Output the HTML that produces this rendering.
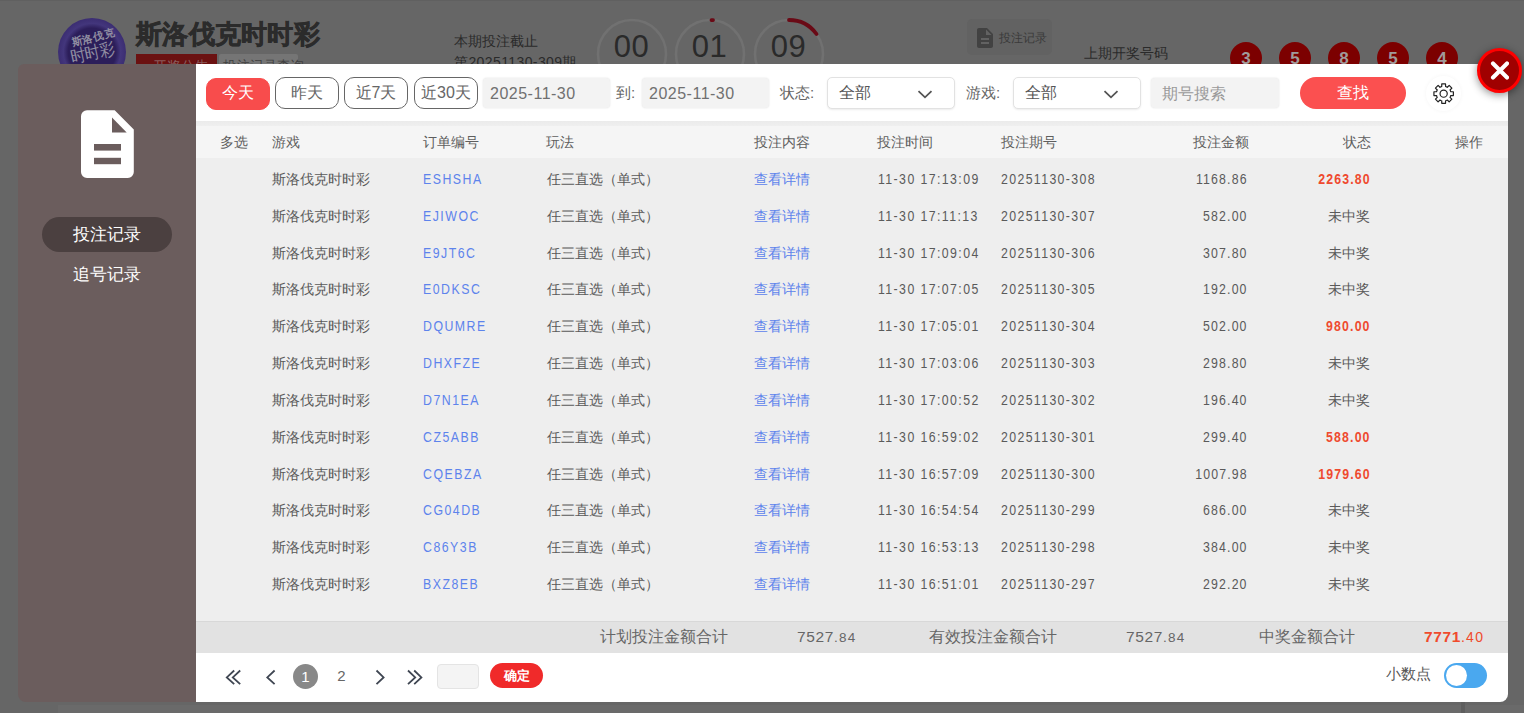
<!DOCTYPE html>
<html><head><meta charset="utf-8">
<style>
*{box-sizing:border-box;margin:0;padding:0}
html,body{width:1524px;height:713px;overflow:hidden}
body{position:relative;background:#666;font-family:"Liberation Sans",sans-serif;color:#555}
.a{position:absolute;white-space:nowrap}
/* background page */
.logo{left:58px;top:18px;width:68px;height:68px;border-radius:50%;background:radial-gradient(circle closest-side,#2c1e5a 0,#2c1e5a 70%,#43367c 84%,#3b2d72 100%);overflow:hidden}
.logo span{position:absolute;color:#918ea2;white-space:nowrap;line-height:1}
.ttl{left:136px;top:16px;font-size:26px;font-weight:bold;color:#2b2b2b;line-height:36px;-webkit-text-stroke:.7px #2b2b2b;letter-spacing:.3px}
.tabr{left:136px;top:54px;width:81px;height:20px;background:#6b1111}
.tabg{left:219px;top:54px;width:79px;height:20px;background:#757575;border-radius:2px}
.bt{font-size:14px;color:#2a2a2a;line-height:20px}
.dig{font-size:31px;letter-spacing:.5px;color:#2a2a2a;line-height:30px;text-align:center;width:69px}
.hbtn{left:967px;top:19px;width:85px;height:36px;border-radius:5px;background:#626262}
.ball{width:32px;height:32px;border-radius:50%;background:#7c0000;top:42px;color:#a09a9a;font-weight:bold;font-size:17px;line-height:34px;text-align:center}
.bstrip{left:58px;top:705px;width:1466px;height:8px;background:#6a6a6a}
/* modal */
.lp{left:18px;top:64px;width:184px;height:638px;background:#6b5d5d;border-radius:6px 0 0 8px}
.rp{left:196px;top:64px;width:1312px;height:638px;background:#fff;border-radius:0 0 8px 0;overflow:hidden}
.menu{left:42px;top:217px;width:130px;height:35px;border-radius:17.5px;background:#4b4040;color:#fff;font-size:16.5px;line-height:35px;text-align:center}
.menu2{left:42px;top:257px;width:130px;height:34px;color:#fff;font-size:16.5px;line-height:34px;text-align:center}
.btn{top:13px;height:32px;border:1px solid #666;border-radius:10px;font-size:16px;line-height:30px;text-align:center;color:#666;background:#fff}
.btn.on{background:#f84c4c;border-color:#f84c4c;color:#fff}
.inp{top:14px;height:30px;width:127px;background:#f3f3f3;border-radius:4px;box-shadow:0 0 2px rgba(0,0,0,.12);font-size:16px;line-height:32px;color:#707070;padding-left:7px;letter-spacing:.5px}
.lbl{top:14px;font-size:15px;line-height:30px;color:#666}
.sel{top:13px;height:32px;width:128px;border:1px solid #e2e2e2;box-shadow:0 1px 2px rgba(0,0,0,.08);border-radius:5px;background:#fff;font-size:16px;line-height:30px;color:#555;padding-left:11px}
.sel svg{position:absolute;left:89px;top:12px}
.sel path{stroke-width:1.8}
.qbtn{left:1104px;top:13px;width:106px;height:32px;border-radius:16px;background:#fb5050;color:#fff;font-size:16px;line-height:31px;text-align:center}
.gear{left:1230px;top:12px;width:35px;height:35px;border-radius:50%;background:#fff;box-shadow:0 0 4px rgba(0,0,0,.045)}
.gear svg{position:absolute;left:5.9px;top:5.9px}
.thead{left:0;top:57px;width:1312px;height:37px;background:#f5f5f5}
.tband{left:0;top:57px;width:1312px;height:5px;background:linear-gradient(#ebebeb,#efefef)}
.tbody{left:0;top:94px;width:1312px;height:463px;background:#eee}
.th{font-size:14px;color:#5e5e5e;top:70px;line-height:16px}
:root{--r0:97px;--rh:36.82px}
.row{left:0;width:1297px;height:var(--rh)}
.c{position:absolute;top:0;line-height:var(--rh);font-size:14px;color:#5a5a5a;white-space:nowrap}
.n{display:inline-block;transform:scaleX(.88);transform-origin:left center;letter-spacing:1.3px}
.n.r{transform-origin:right center}
.lnk{color:#5d83ec}
.red{color:#ef4a2f;font-weight:bold;letter-spacing:.4px}
.sum{left:0;top:557px;width:1312px;height:32px;background:#e2e2e2;border-top:1px solid #d8d8d8}
.st{top:557px;font-size:16px;line-height:31px;color:#666}
.big{font-size:15.5px;letter-spacing:.6px}
.sml{font-size:13.5px;letter-spacing:1.3px}
.pgi{top:605px}
.pnum{top:600px;width:25px;height:25px;border-radius:50%;font-size:15px;line-height:25px;text-align:center;color:#666}
.pbox{left:241px;top:600px;width:42px;height:25px;background:#f4f4f4;border:1px solid #e4e4e4;border-radius:4px}
.ok{left:294px;top:599px;width:53px;height:25px;border-radius:13px;background:#f02a2a;color:#fff;font-size:13px;font-weight:bold;line-height:25px;text-align:center}
.tog{left:1248px;top:599px;width:43px;height:25px;border-radius:13px;background:#4aa8ef}
.tog i{position:absolute;left:2px;top:2px;width:21px;height:21px;border-radius:50%;background:#fff}
.close{left:1477px;top:48px;width:45px;height:45px;border-radius:50%;background:#a00000;border:3px solid #f00;box-shadow:0 2px 8px rgba(0,0,0,.45)}
.close svg{position:absolute;left:10px;top:10px}
</style></head><body>
<!-- background page -->
<div class="a bstrip"></div>
<div class="a" style="left:0;top:0;width:1524px;height:1px;background:#606060"></div>
<div class="a" style="left:1461px;top:702px;width:4px;height:11px;background:#5e5e5e"></div>
<div class="a logo">
  <span style="left:13px;top:14px;font-size:10.5px;transform:rotate(-14deg);font-weight:bold">斯洛伐克</span>
  <span style="left:12px;top:27px;font-size:15px;transform:rotate(-12deg) scaleY(1.15)">时时彩</span>
</div>
<div class="a ttl">斯洛伐克时时彩</div>
<div class="a tabr"></div>
<div class="a tabg"></div>
<div class="a" style="left:153px;top:57px;font-size:14px;line-height:18px;color:#8a5a5a">开奖公告</div>
<div class="a" style="left:223px;top:57px;font-size:13px;line-height:18px;color:#404040;letter-spacing:.6px">投注记录查询</div>
<div class="a bt" style="left:454px;top:31px">本期投注截止</div>
<div class="a bt" style="left:454px;top:52px;letter-spacing:.4px">第20251130-309期</div>
<svg class="a" style="left:590px;top:12px" width="250" height="90" viewBox="0 0 250 90">
  <g fill="none" stroke="#717171" stroke-width="2.6">
    <circle cx="42" cy="42" r="34"/><circle cx="120" cy="42" r="34"/><circle cx="199" cy="42" r="34"/>
  </g>
  <g fill="none" stroke="#6a0a16" stroke-width="3.8" stroke-linecap="round">
    <path d="M121.5 8.1 A34 34 0 0 1 123 8.2"/>
    <path d="M199 8 A34 34 0 0 1 226.5 22"/>
  </g>
</svg>
<div class="a dig" style="left:597px;top:32px">00</div>
<div class="a dig" style="left:675px;top:32px">01</div>
<div class="a dig" style="left:754px;top:32px">09</div>
<div class="a hbtn"></div>
<svg class="a" style="left:973px;top:26px" width="24" height="24" viewBox="0 0 24 24"><path fill="#424242" d="M14 2H6c-1.1 0-1.99.9-1.99 2L4 20c0 1.1.89 2 1.99 2H18c1.1 0 2-.9 2-2V8l-6-6zm2 16H8v-2h8v2zm0-4H8v-2h8v2zm-3-5V3.5L18.5 9H13z"/></svg>
<div class="a bt" style="left:999px;top:28px;font-size:12px;color:#3a3a3a">投注记录</div>
<div class="a bt" style="left:1084px;top:43px">上期开奖号码</div>
<div class="a ball" style="left:1230px">3</div>
<div class="a ball" style="left:1279px">5</div>
<div class="a ball" style="left:1328px">8</div>
<div class="a ball" style="left:1377px">5</div>
<div class="a ball" style="left:1426px">4</div>

<!-- modal left -->
<div class="a lp"></div>
<svg class="a" style="left:76px;top:104px" width="64" height="80" viewBox="0 0 64 80"><path fill="#fff" d="M11 6.2H38.7L57.8 25.4V68.1a6 6 0 0 1-6 6H11a6 6 0 0 1-6-6V12.2a6 6 0 0 1 6-6Z"/><path fill="#6b5d5d" d="M36 13.5V28.6H50.7Z"/><rect fill="#6b5d5d" x="18" y="40" width="27" height="6.6"/><rect fill="#6b5d5d" x="18" y="53.8" width="27" height="6.4"/></svg>
<div class="a menu">投注记录</div>
<div class="a menu2">追号记录</div>

<!-- modal right -->
<div class="a rp">
  <div class="a btn on" style="left:10px;width:64px;top:14px;line-height:28px;font-size:16px">今天</div>
  <div class="a btn" style="left:79px;width:64px">昨天</div>
  <div class="a btn" style="left:148px;width:64px">近7天</div>
  <div class="a btn" style="left:218px;width:64px">近30天</div>
  <div class="a inp" style="left:287px">2025-11-30</div>
  <div class="a lbl" style="left:420px">到:</div>
  <div class="a inp" style="left:446px">2025-11-30</div>
  <div class="a lbl" style="left:584px">状态:</div>
  <div class="a sel" style="left:631px">全部<svg width="16" height="9" viewBox="0 0 16 9"><path d="M1.5 1.2L8 7.3L14.5 1.2" fill="none" stroke="#555" stroke-width="2"/></svg></div>
  <div class="a lbl" style="left:770px">游戏:</div>
  <div class="a sel" style="left:817px">全部<svg width="16" height="9" viewBox="0 0 16 9"><path d="M1.5 1.2L8 7.3L14.5 1.2" fill="none" stroke="#555" stroke-width="2"/></svg></div>
  <div class="a inp" style="left:955px;width:128px;font-size:16px;color:#999;padding-left:11px;letter-spacing:0">期号搜索</div>
  <div class="a qbtn">查找</div>
  <div class="a gear"><svg width="23.3" height="23.3" viewBox="0 0 24 24"><path fill="none" stroke="#222" stroke-width="1.25" stroke-linejoin="round" d="M9.09 4.98 L10.03 4.66 L10.05 1.99 L13.95 1.99 L13.97 4.66 L14.91 4.98 L15.80 5.42 L17.70 3.54 L20.46 6.30 L18.58 8.20 L19.02 9.09 L19.34 10.03 L22.01 10.05 L22.01 13.95 L19.34 13.97 L19.02 14.91 L18.58 15.80 L20.46 17.70 L17.70 20.46 L15.80 18.58 L14.91 19.02 L13.97 19.34 L13.95 22.01 L10.05 22.01 L10.03 19.34 L9.09 19.02 L8.20 18.58 L6.30 20.46 L3.54 17.70 L5.42 15.80 L4.98 14.91 L4.66 13.97 L1.99 13.95 L1.99 10.05 L4.66 10.03 L4.98 9.09 L5.42 8.20 L3.54 6.30 L6.30 3.54 L8.20 5.42Z"/><circle cx="12" cy="12" r="3.7" fill="none" stroke="#222" stroke-width="1.25"/></svg></div>

  <div class="a thead"></div>
  <div class="a tband"></div>
  <div class="a tbody"></div>
  <div class="a th" style="left:24px">多选</div>
  <div class="a th" style="left:76px">游戏</div>
  <div class="a th" style="left:227px">订单编号</div>
  <div class="a th" style="left:350px">玩法</div>
  <div class="a th" style="left:558px">投注内容</div>
  <div class="a th" style="left:681px">投注时间</div>
  <div class="a th" style="left:805px">投注期号</div>
  <div class="a th" style="left:997px">投注金额</div>
  <div class="a th" style="left:1147px">状态</div>
  <div class="a th" style="left:1259px">操作</div>
  <div class="a row" style="top:calc(var(--r0) + 0 * var(--rh))">
<div class="c" style="left:76px">斯洛伐克时时彩</div>
<div class="c lnk" style="left:227px"><span class="n" style="letter-spacing:1.7px">ESHSHA</span></div>
<div class="c" style="left:351px">任三直选（单式）</div>
<div class="c lnk" style="left:558px">查看详情</div>
<div class="c" style="left:682px"><span class="n" style="letter-spacing:1.6px">11-30 17:13:09</span></div>
<div class="c" style="left:805px"><span class="n" style="letter-spacing:1.55px">20251130-308</span></div>
<div class="c" style="right:245px"><span class="n r">1168.86</span></div>
<div class="c red" style="right:122px"><span class="n r">2263.80</span></div>
</div>
<div class="a row" style="top:calc(var(--r0) + 1 * var(--rh))">
<div class="c" style="left:76px">斯洛伐克时时彩</div>
<div class="c lnk" style="left:227px"><span class="n" style="letter-spacing:1.7px">EJIWOC</span></div>
<div class="c" style="left:351px">任三直选（单式）</div>
<div class="c lnk" style="left:558px">查看详情</div>
<div class="c" style="left:682px"><span class="n" style="letter-spacing:1.6px">11-30 17:11:13</span></div>
<div class="c" style="left:805px"><span class="n" style="letter-spacing:1.55px">20251130-307</span></div>
<div class="c" style="right:245px"><span class="n r">582.00</span></div>
<div class="c" style="right:123px">未中奖</div>
</div>
<div class="a row" style="top:calc(var(--r0) + 2 * var(--rh))">
<div class="c" style="left:76px">斯洛伐克时时彩</div>
<div class="c lnk" style="left:227px"><span class="n" style="letter-spacing:1.7px">E9JT6C</span></div>
<div class="c" style="left:351px">任三直选（单式）</div>
<div class="c lnk" style="left:558px">查看详情</div>
<div class="c" style="left:682px"><span class="n" style="letter-spacing:1.6px">11-30 17:09:04</span></div>
<div class="c" style="left:805px"><span class="n" style="letter-spacing:1.55px">20251130-306</span></div>
<div class="c" style="right:245px"><span class="n r">307.80</span></div>
<div class="c" style="right:123px">未中奖</div>
</div>
<div class="a row" style="top:calc(var(--r0) + 3 * var(--rh))">
<div class="c" style="left:76px">斯洛伐克时时彩</div>
<div class="c lnk" style="left:227px"><span class="n" style="letter-spacing:1.7px">E0DKSC</span></div>
<div class="c" style="left:351px">任三直选（单式）</div>
<div class="c lnk" style="left:558px">查看详情</div>
<div class="c" style="left:682px"><span class="n" style="letter-spacing:1.6px">11-30 17:07:05</span></div>
<div class="c" style="left:805px"><span class="n" style="letter-spacing:1.55px">20251130-305</span></div>
<div class="c" style="right:245px"><span class="n r">192.00</span></div>
<div class="c" style="right:123px">未中奖</div>
</div>
<div class="a row" style="top:calc(var(--r0) + 4 * var(--rh))">
<div class="c" style="left:76px">斯洛伐克时时彩</div>
<div class="c lnk" style="left:227px"><span class="n" style="letter-spacing:1.7px">DQUMRE</span></div>
<div class="c" style="left:351px">任三直选（单式）</div>
<div class="c lnk" style="left:558px">查看详情</div>
<div class="c" style="left:682px"><span class="n" style="letter-spacing:1.6px">11-30 17:05:01</span></div>
<div class="c" style="left:805px"><span class="n" style="letter-spacing:1.55px">20251130-304</span></div>
<div class="c" style="right:245px"><span class="n r">502.00</span></div>
<div class="c red" style="right:122px"><span class="n r">980.00</span></div>
</div>
<div class="a row" style="top:calc(var(--r0) + 5 * var(--rh))">
<div class="c" style="left:76px">斯洛伐克时时彩</div>
<div class="c lnk" style="left:227px"><span class="n" style="letter-spacing:1.7px">DHXFZE</span></div>
<div class="c" style="left:351px">任三直选（单式）</div>
<div class="c lnk" style="left:558px">查看详情</div>
<div class="c" style="left:682px"><span class="n" style="letter-spacing:1.6px">11-30 17:03:06</span></div>
<div class="c" style="left:805px"><span class="n" style="letter-spacing:1.55px">20251130-303</span></div>
<div class="c" style="right:245px"><span class="n r">298.80</span></div>
<div class="c" style="right:123px">未中奖</div>
</div>
<div class="a row" style="top:calc(var(--r0) + 6 * var(--rh))">
<div class="c" style="left:76px">斯洛伐克时时彩</div>
<div class="c lnk" style="left:227px"><span class="n" style="letter-spacing:1.7px">D7N1EA</span></div>
<div class="c" style="left:351px">任三直选（单式）</div>
<div class="c lnk" style="left:558px">查看详情</div>
<div class="c" style="left:682px"><span class="n" style="letter-spacing:1.6px">11-30 17:00:52</span></div>
<div class="c" style="left:805px"><span class="n" style="letter-spacing:1.55px">20251130-302</span></div>
<div class="c" style="right:245px"><span class="n r">196.40</span></div>
<div class="c" style="right:123px">未中奖</div>
</div>
<div class="a row" style="top:calc(var(--r0) + 7 * var(--rh))">
<div class="c" style="left:76px">斯洛伐克时时彩</div>
<div class="c lnk" style="left:227px"><span class="n" style="letter-spacing:1.7px">CZ5ABB</span></div>
<div class="c" style="left:351px">任三直选（单式）</div>
<div class="c lnk" style="left:558px">查看详情</div>
<div class="c" style="left:682px"><span class="n" style="letter-spacing:1.6px">11-30 16:59:02</span></div>
<div class="c" style="left:805px"><span class="n" style="letter-spacing:1.55px">20251130-301</span></div>
<div class="c" style="right:245px"><span class="n r">299.40</span></div>
<div class="c red" style="right:122px"><span class="n r">588.00</span></div>
</div>
<div class="a row" style="top:calc(var(--r0) + 8 * var(--rh))">
<div class="c" style="left:76px">斯洛伐克时时彩</div>
<div class="c lnk" style="left:227px"><span class="n" style="letter-spacing:1.7px">CQEBZA</span></div>
<div class="c" style="left:351px">任三直选（单式）</div>
<div class="c lnk" style="left:558px">查看详情</div>
<div class="c" style="left:682px"><span class="n" style="letter-spacing:1.6px">11-30 16:57:09</span></div>
<div class="c" style="left:805px"><span class="n" style="letter-spacing:1.55px">20251130-300</span></div>
<div class="c" style="right:245px"><span class="n r">1007.98</span></div>
<div class="c red" style="right:122px"><span class="n r">1979.60</span></div>
</div>
<div class="a row" style="top:calc(var(--r0) + 9 * var(--rh))">
<div class="c" style="left:76px">斯洛伐克时时彩</div>
<div class="c lnk" style="left:227px"><span class="n" style="letter-spacing:1.7px">CG04DB</span></div>
<div class="c" style="left:351px">任三直选（单式）</div>
<div class="c lnk" style="left:558px">查看详情</div>
<div class="c" style="left:682px"><span class="n" style="letter-spacing:1.6px">11-30 16:54:54</span></div>
<div class="c" style="left:805px"><span class="n" style="letter-spacing:1.55px">20251130-299</span></div>
<div class="c" style="right:245px"><span class="n r">686.00</span></div>
<div class="c" style="right:123px">未中奖</div>
</div>
<div class="a row" style="top:calc(var(--r0) + 10 * var(--rh))">
<div class="c" style="left:76px">斯洛伐克时时彩</div>
<div class="c lnk" style="left:227px"><span class="n" style="letter-spacing:1.7px">C86Y3B</span></div>
<div class="c" style="left:351px">任三直选（单式）</div>
<div class="c lnk" style="left:558px">查看详情</div>
<div class="c" style="left:682px"><span class="n" style="letter-spacing:1.6px">11-30 16:53:13</span></div>
<div class="c" style="left:805px"><span class="n" style="letter-spacing:1.55px">20251130-298</span></div>
<div class="c" style="right:245px"><span class="n r">384.00</span></div>
<div class="c" style="right:123px">未中奖</div>
</div>
<div class="a row" style="top:calc(var(--r0) + 11 * var(--rh))">
<div class="c" style="left:76px">斯洛伐克时时彩</div>
<div class="c lnk" style="left:227px"><span class="n" style="letter-spacing:1.7px">BXZ8EB</span></div>
<div class="c" style="left:351px">任三直选（单式）</div>
<div class="c lnk" style="left:558px">查看详情</div>
<div class="c" style="left:682px"><span class="n" style="letter-spacing:1.6px">11-30 16:51:01</span></div>
<div class="c" style="left:805px"><span class="n" style="letter-spacing:1.55px">20251130-297</span></div>
<div class="c" style="right:245px"><span class="n r">292.20</span></div>
<div class="c" style="right:123px">未中奖</div>
</div>

  <div class="a sum"></div>
  <div class="a st" style="left:404px">计划投注金额合计</div>
  <div class="a st" style="left:601px"><span class="big">7527</span><span class="sml">.84</span></div>
  <div class="a st" style="left:733px">有效投注金额合计</div>
  <div class="a st" style="left:930px"><span class="big">7527</span><span class="sml">.84</span></div>
  <div class="a st" style="left:1063px">中奖金额合计</div>
  <div class="a st" style="left:1228px;color:#f04a2c"><span class="big" style="font-weight:bold">7771</span><span class="sml" style="font-size:14px">.40</span></div>

  <svg class="a pgi" style="left:28px" width="20" height="17" viewBox="0 0 20 17"><path d="M10.2 1.5L2.8 8.4L10.2 15.2M16.2 1.5L8.8 8.4L16.2 15.2" fill="none" stroke="#3f4652" stroke-width="1.8"/></svg>
  <svg class="a pgi" style="left:68px" width="14" height="17" viewBox="0 0 14 17"><path d="M10.6 1.5L3.3 8.4L10.6 15.2" fill="none" stroke="#3f4652" stroke-width="1.8"/></svg>
  <div class="a pnum" style="left:97px;background:#888;color:#fff">1</div>
  <div class="a pnum" style="left:133px;top:599px">2</div>
  <svg class="a pgi" style="left:176px" width="14" height="17" viewBox="0 0 14 17"><path d="M4.5 1.5L11.6 8.4L4.5 15.2" fill="none" stroke="#3f4652" stroke-width="1.8"/></svg>
  <svg class="a pgi" style="left:208px" width="20" height="17" viewBox="0 0 20 17"><path d="M4 1.5L11.2 8.4L4 15.2M10.2 1.5L17.4 8.4L10.2 15.2" fill="none" stroke="#3f4652" stroke-width="1.8"/></svg>
  <div class="a pbox"></div>
  <div class="a ok">确定</div>
  <div class="a" style="left:1190px;top:600px;font-size:15px;line-height:20px;color:#555">小数点</div>
  <div class="a tog"><i></i></div>
</div>
<div class="a close"><svg width="19" height="19" viewBox="0 0 19 19"><path d="M3 2.5L17 16.5M17 2.5L3 16.5" stroke="#fff" stroke-width="4.1" stroke-linecap="round"/></svg></div>
</body></html>
